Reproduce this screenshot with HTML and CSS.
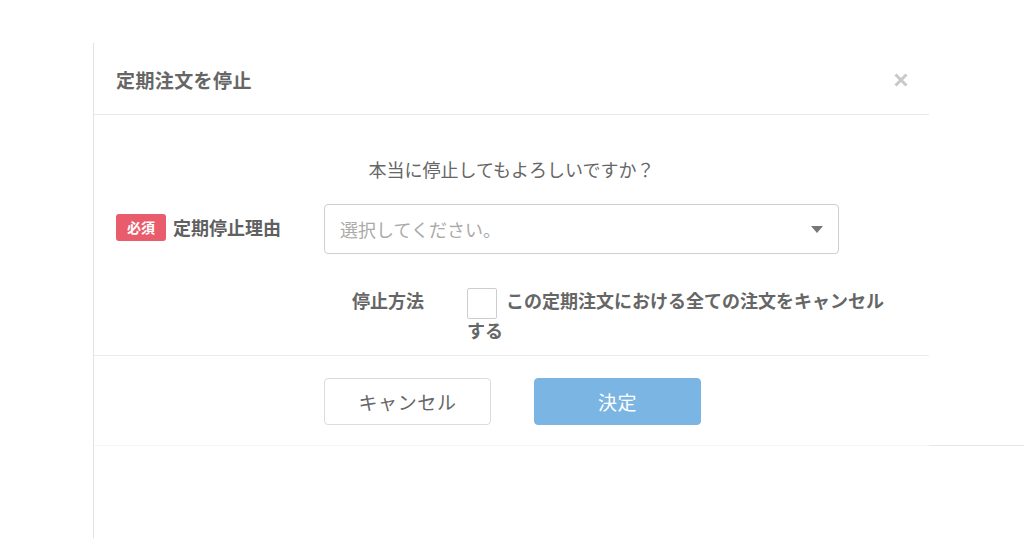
FILE: index.html
```html
<!DOCTYPE html>
<html lang="ja">
<head>
<meta charset="utf-8">
<title>定期注文を停止</title>
<link rel="stylesheet" href="styles.css">
</head>
<body>
<div class="page">
  <div class="frame">
    <div class="stage">
      <div class="modal">
        <div class="modal-header">
          <h2 class="title">定期注文を停止</h2>
          <span class="close" aria-label="閉じる">
            <svg width="16" height="16" viewBox="0 0 16 16"><path d="M2.5 2.5 L13.5 13.5 M13.5 2.5 L2.5 13.5" stroke="#c9c9c9" stroke-width="3" stroke-linecap="butt" fill="none"/></svg>
          </span>
        </div>
        <div class="modal-body">
          <p class="question">本当に停止してもよろしいですか？</p>
          <div class="row-reason">
            <div class="label-col">
              <span class="badge">必須</span>
              <span class="label">定期停止理由</span>
            </div>
            <div class="select">
              <span class="placeholder">選択してください。</span>
              <span class="caret"></span>
            </div>
          </div>
          <div class="row-method">
            <span class="method-label">停止方法</span>
            <div class="method-content"><span class="checkbox"></span>この定期注文における全ての注文をキャンセルする</div>
          </div>
        </div>
        <div class="modal-footer">
          <button class="btn btn-cancel">キャンセル</button>
          <button class="btn btn-ok">決定</button>
        </div>
      </div>
      <div class="rest"></div>
    </div>
  </div>
</div>
</body>
</html>
```

FILE: styles.css
```css
html, body {
  margin: 0;
  padding: 0;
  background: #fff;
}
body {
  font-family: "Noto Sans CJK JP", "Noto Sans", sans-serif;
  color: #666;
}
.page {
  padding-top: 43px;
  padding-left: 93px;
  height: 495px;
  overflow: hidden;
}
.frame {
  height: 495px;
  border-left: 1px solid #e2e2e2;
}
.stage {
  display: flex;
  align-items: flex-start;
}
.modal {
  width: 835px;
  flex: none;
  border-bottom: 1px solid #f6f6f6;
}
.rest {
  flex: 1;
  height: 402px;
  border-bottom: 1px solid #e7e7e7;
}
.modal-header {
  height: 71px;
  border-bottom: 1px solid #e9e9e9;
  display: flex;
  align-items: center;
  justify-content: space-between;
  padding: 0 20px 0 22px;
}
.title {
  margin: 0;
  font-size: 19px;
  font-weight: bold;
  color: #666;
  line-height: 28px;
  letter-spacing: 0.4px;
  padding-top: 2px;
}
.close {
  display: flex;
  width: 16px;
  height: 16px;
  padding-top: 2px;
}
.modal-body {
  height: 199px;
  padding: 41px 0 0 22px;
  border-bottom: 1px solid #ebebeb;
}
.question {
  margin: 0 0 0 -22px;
  text-align: center;
  font-size: 18px;
  line-height: 26px;
  color: #666;
}
.row-reason {
  display: flex;
  align-items: center;
  margin-top: 22px;
}
.label-col {
  width: 208px;
  display: flex;
  align-items: center;
  gap: 7px;
}
.badge {
  width: 50px;
  height: 27px;
  background: #e85c6b;
  color: #fff;
  border-radius: 3px;
  font-size: 14px;
  font-weight: bold;
  display: flex;
  align-items: center;
  justify-content: center;
  margin-top: -4px;
}
.label {
  font-size: 18px;
  font-weight: bold;
  color: #606060;
  line-height: 26px;
  margin-top: -5px;
}
.select {
  height: 48px;
  border: 1px solid #cfcfcf;
  border-radius: 4px;
  display: flex;
  align-items: center;
  justify-content: space-between;
  padding: 0 15px 0 15px;
  box-sizing: content-box;
  width: 483px;
}
.placeholder {
  font-size: 18px;
  color: #aaa;
}
.caret {
  width: 0;
  height: 0;
  border-left: 6px solid transparent;
  border-right: 6px solid transparent;
  border-top: 7px solid #777;
}
.row-method {
  display: flex;
  align-items: flex-start;
  margin-top: 31px;
  padding-left: 236px;
}
.method-label {
  width: 115px;
  flex: none;
  font-size: 18px;
  font-weight: bold;
  line-height: 30px;
  color: #666;
}
.method-content {
  width: 425px;
  font-size: 18px;
  font-weight: bold;
  line-height: 30px;
  color: #666;
}
.checkbox {
  display: inline-block;
  width: 28px;
  height: 29px;
  border: 1px solid #cdcdcd;
  border-radius: 2px;
  margin: -5px 9px -5px 0;
  vertical-align: -6px;
  box-sizing: content-box;
}
.modal-footer {
  height: 89px;
  display: flex;
  align-items: center;
  justify-content: center;
  gap: 43px;
  padding-left: 2px;
}
.btn {
  width: 167px;
  height: 47px;
  border-radius: 4px;
  font-family: "Noto Sans CJK JP", "Noto Sans", sans-serif;
  font-size: 19px;
  letter-spacing: 0.6px;
  cursor: pointer;
  margin-top: 1px;
}
.btn-cancel {
  background: #fff;
  border: 1px solid #dcdcdc;
  color: #666;
}
.btn-ok {
  background: #7bb5e3;
  border: 1px solid #7bb5e3;
  color: #fff;
}
```
